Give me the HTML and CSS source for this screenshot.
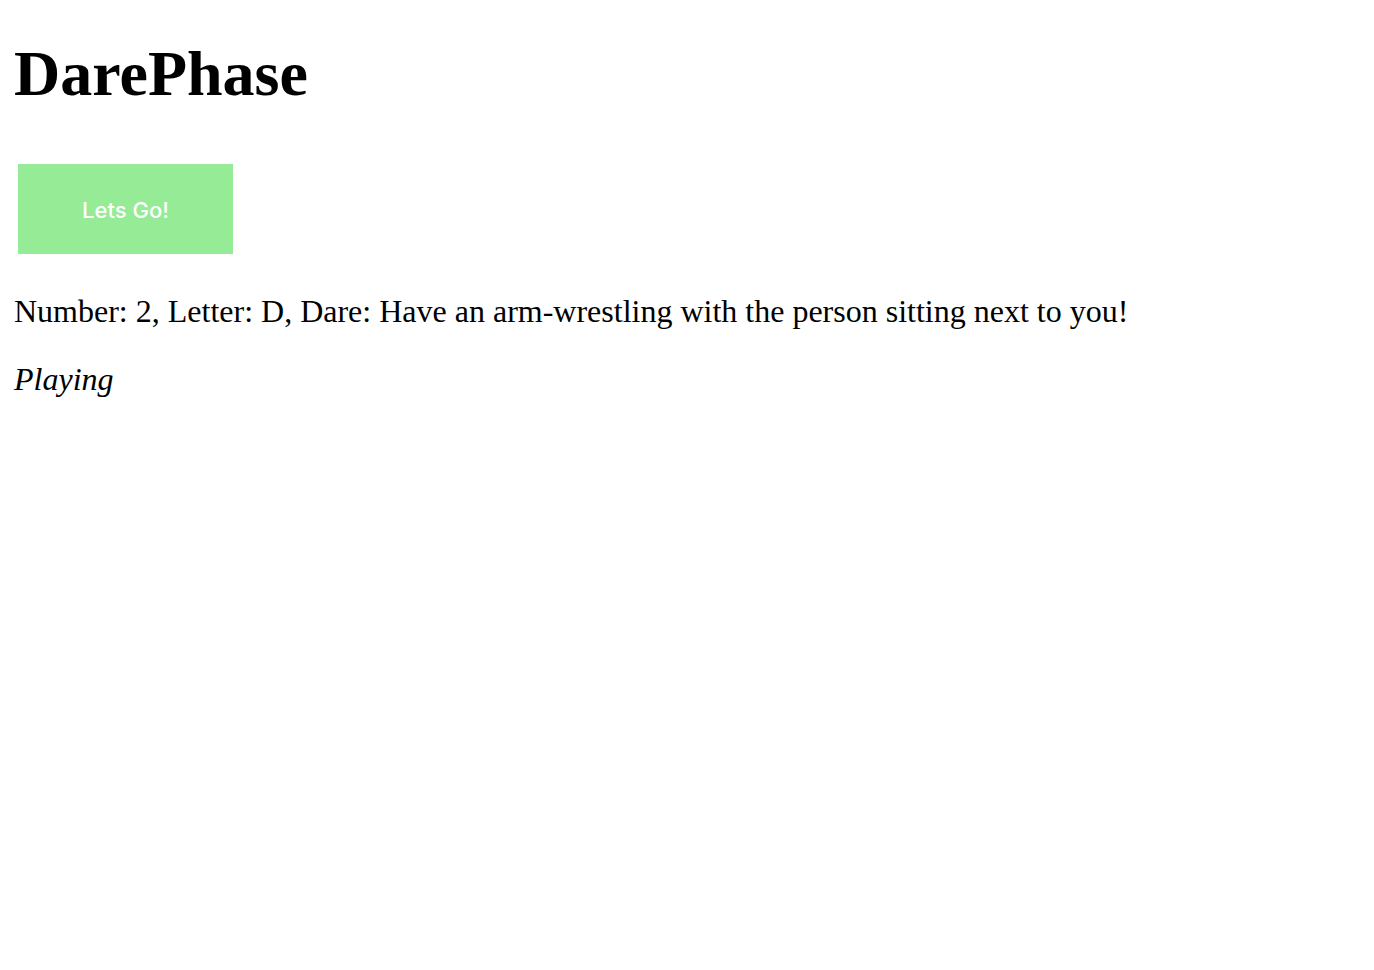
FILE: index.html
```html
<!DOCTYPE html>
<html>
<head>
<meta charset="utf-8">
<link rel="stylesheet" href="styles.css">
</head>
<body>
<h1 class="title">DarePhase</h1>
<button class="go">Lets Go!</button>
<p class="dare">Number: 2, Letter: D, Dare: Have an arm-wrestling with the person sitting next to you!</p>
<p class="status"><em>Playing</em></p>
</body>
</html>
```
FILE: styles.css
```css
body {
  margin: 0;
  padding: 0 14px;
  font-family: "Liberation Serif", "Times New Roman", serif;
  color: #000;
  background: #fff;
}
.title {
  font-size: 64px;
  font-weight: bold;
  line-height: 71px;
  margin: 38px 0 0 0;
}
.go {
  display: block;
  margin: 55px 0 0 4px;
  width: 215px;
  height: 90px;
  border: none;
  background: #96eb96;
  color: #fff;
  font-family: Inter, "Noto Sans", sans-serif;
  font-size: 22px;
  font-weight: 500;
  padding: 2px 0 0 0;
  line-height: 88px;
}
.dare {
  font-size: 32px;
  line-height: 36px;
  margin: 39px 0 0 0;
}
.status {
  font-size: 32px;
  line-height: 36px;
  margin: 32px 0 0 0;
}
```
